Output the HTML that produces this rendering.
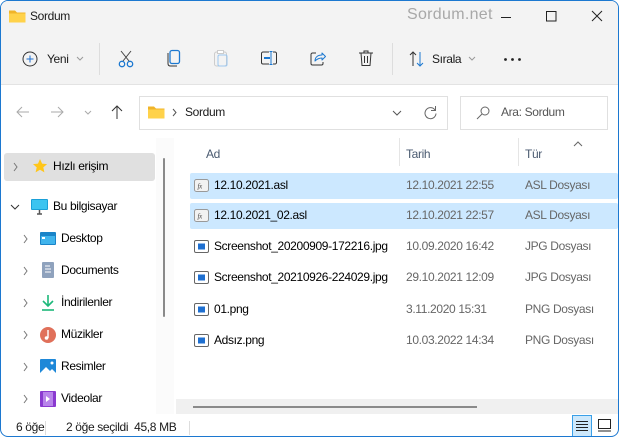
<!DOCTYPE html>
<html><head><meta charset="utf-8"><style>
*{margin:0;padding:0;box-sizing:border-box}
body{width:620px;height:438px;background:#fff;font-family:"Liberation Sans","DejaVu Sans",sans-serif;font-size:12px;color:#1a1a1a;position:relative;overflow:hidden;letter-spacing:-0.35px}
.win{position:absolute;left:0;top:0;width:619px;height:437px;border:1px solid #1c78d0;border-radius:8px;overflow:hidden;background:#fff}
.top{position:absolute;left:0;top:0;right:0;height:84px;background:#f3f3f3;border-bottom:1px solid #e3e3e3}
.a{position:absolute;white-space:nowrap}
svg{position:absolute;overflow:visible}
.row{position:absolute;left:189px;width:428px;height:26px}
.sel{background:#cce8ff}
.nm{position:absolute;left:24px;top:5px;font-size:12px;color:#000}
.dt{position:absolute;left:216px;top:5px;color:#666}
.tp{position:absolute;left:335px;top:5px;color:#666}
.nav{position:absolute;font-size:12px;color:#000}
</style></head><body><div class="win">
<div class="top"></div>
<svg style="left:8px;top:8px" width="17" height="14"><path d="M0 1.5h6l2 2h8.5v10H0z" fill="#f0b429"/><path d="M0 4.5h16.5v9H0z" fill="#ffd24a"/></svg>
<div class="a" style="left:29px;top:8px;font-size:12px">Sordum</div>
<div class="a" style="left:406px;top:5px;font-size:16px;color:#a8a8a8;letter-spacing:.3px">Sordum.net</div>
<svg style="left:500px;top:16px" width="11" height="2"><path d="M0 .5h10" stroke="#222"/></svg>
<svg style="left:545px;top:10px" width="11" height="11"><rect x=".5" y=".5" width="9.5" height="9.5" fill="none" stroke="#222"/></svg>
<svg style="left:591px;top:10px" width="11" height="11"><path d="M0 0l10 10M10 0L0 10" stroke="#222"/></svg>
<svg style="left:21px;top:50px" width="16" height="16"><circle cx="8" cy="8" r="7" fill="none" stroke="#333"/><path d="M8 4.5v7M4.5 8h7" stroke="#1c6fd0"/></svg>
<div class="a" style="left:46px;top:51px">Yeni</div>
<svg style="left:76px;top:56px" width="7" height="4"><path d="M0 0l3 3 3-3" fill="none" stroke="#999"/></svg>
<div class="a" style="left:98px;top:42px;width:1px;height:32px;background:#ddd"></div>
<svg style="left:117px;top:50px" width="17" height="17"><path d="M3 0l8 10M13 0L5 10" stroke="#444"/><circle cx="4" cy="13" r="2.7" fill="none" stroke="#1c78d0" stroke-width="1.3"/><circle cx="12" cy="13" r="2.7" fill="none" stroke="#1c78d0" stroke-width="1.3"/></svg>
<svg style="left:166px;top:49px" width="14" height="17"><rect x="3" y=".5" width="9.5" height="13" rx="2" fill="none" stroke="#1c78d0" stroke-width="1.3"/><path d="M1 3v10.5c0 1.5 1 2.5 2.5 2.5H10" fill="none" stroke="#333"/></svg>
<svg style="left:213px;top:49px" width="15" height="17"><rect x=".5" y="2" width="12" height="14" rx="2" fill="none" stroke="#ccc"/><rect x="4" y="5" width="9" height="11" rx="1.5" fill="none" stroke="#9cc7ef"/><rect x="3.5" y=".5" width="6" height="3" fill="#fff" stroke="#ccc"/></svg>
<svg style="left:260px;top:50px" width="17" height="15"><path d="M8 1H2a1.5 1.5 0 0 0-1.5 1.5v9A1.5 1.5 0 0 0 2 13h6M12 1h2a1.5 1.5 0 0 1 1.5 1.5v9A1.5 1.5 0 0 1 14 13h-2" fill="none" stroke="#333"/><path d="M3 7h6" stroke="#1c78d0" stroke-width="2"/><path d="M10 0v14M8.5 .5h3M8.5 13.5h3" stroke="#1c78d0"/></svg>
<svg style="left:309px;top:49px" width="16" height="16"><path d="M6 3H2.5A1.5 1.5 0 0 0 1 4.5v9A1.5 1.5 0 0 0 2.5 15h9a1.5 1.5 0 0 0 1.5-1.5V12" fill="none" stroke="#333"/><path d="M5 11c0-4 3-6 7-6V3l3.5 3.5L12 10V8c-3 0-5 1-7 3z" fill="none" stroke="#1c78d0" stroke-linejoin="round"/></svg>
<svg style="left:358px;top:49px" width="15" height="17"><path d="M0 3h14M5 3V1h4v2M2 3l1 12.5h8L12 3M5.5 6v7M8.5 6v7" fill="none" stroke="#333"/></svg>
<div class="a" style="left:391px;top:42px;width:1px;height:32px;background:#ddd"></div>
<svg style="left:408px;top:50px" width="16" height="16"><path d="M4 15V1M1 4l3-3 3 3" fill="none" stroke="#333"/><path d="M11 1v14M8 12l3 3 3-3" fill="none" stroke="#1c78d0"/></svg>
<div class="a" style="left:431px;top:51px">Sırala</div>
<svg style="left:468px;top:56px" width="7" height="4"><path d="M0 0l3 3 3-3" fill="none" stroke="#999"/></svg>
<svg style="left:503px;top:57px" width="18" height="3"><circle cx="1.5" cy="1.5" r="1.4" fill="#222"/><circle cx="8.5" cy="1.5" r="1.4" fill="#222"/><circle cx="15.5" cy="1.5" r="1.4" fill="#222"/></svg>
<svg style="left:15px;top:105px" width="14" height="12"><path d="M13 6H1M6 1L1 6l5 5" fill="none" stroke="#aaa"/></svg>
<svg style="left:50px;top:105px" width="14" height="12"><path d="M0 6h12M7 1l5 5-5 5" fill="none" stroke="#aaa"/></svg>
<svg style="left:84px;top:110px" width="6" height="4"><path d="M0 0l3 3 3-3" fill="none" stroke="#aaa"/></svg>
<svg style="left:110px;top:104px" width="12" height="14"><path d="M6 14V1M1 6l5-5 5 5" fill="none" stroke="#333"/></svg>
<div class="a" style="left:138px;top:95px;width:309px;height:34px;border:1px solid #e0e0e0;background:#fff"></div>
<svg style="left:147px;top:104px" width="17" height="14"><path d="M0 1.5h6l2 2h8.5v10H0z" fill="#f0b429"/><path d="M0 4.5h16.5v9H0z" fill="#ffd24a"/></svg>
<svg style="left:171px;top:108px" width="5" height="7"><path d="M1 0l3 3.5L1 7" fill="none" stroke="#555"/></svg>
<div class="a" style="left:184px;top:104px">Sordum</div>
<svg style="left:392px;top:110px" width="8" height="5"><path d="M0 0l4 4 4-4" fill="none" stroke="#555"/></svg>
<svg style="left:423px;top:105px" width="13" height="13"><path d="M11 4A5.5 5.5 0 1 0 12 7.5" fill="none" stroke="#666"/><path d="M11.5 0v4.5H7" fill="none" stroke="#666"/></svg>
<div class="a" style="left:459px;top:95px;width:148px;height:34px;border:1px solid #e0e0e0;background:#fff"></div>
<svg style="left:476px;top:105px" width="13" height="13"><circle cx="8" cy="5" r="4" fill="none" stroke="#666"/><path d="M5 8L0 13" stroke="#666"/></svg>
<div class="a" style="left:500px;top:104px;color:#555">Ara: Sordum</div>
<div class="a" style="left:155px;top:137px;width:18px;height:276px;background:#fbfbfb"></div>
<div class="a" style="left:162px;top:157px;width:2px;height:159px;background:#8a8a8a;border-radius:1px"></div>
<div class="a" style="left:3px;top:152px;width:151px;height:28px;background:#e0e0e0;border-radius:3px"></div>
<svg style="left:12px;top:162px" width="5" height="8"><path d="M1 0l3 4-3 4" fill="none" stroke="#777"/></svg>
<svg style="left:32px;top:158px" width="14" height="14"><path d="M7 0l2.1 4.6 5 .5-3.8 3.3 1.1 5L7 10.8 2.6 13.4l1.1-5L0 5.1l5-.5z" fill="#ffc61a"/></svg>
<div class="nav" style="left:52px;top:158px">Hızlı erişim</div>
<svg style="left:10px;top:204px" width="9" height="5"><path d="M0 0l4 4 4-4" fill="none" stroke="#333"/></svg>
<svg style="left:30px;top:198px" width="17" height="16"><rect x="0" y="0" width="17" height="11" rx="1" fill="#1aa0d8"/><rect x="1" y="1" width="15" height="9" fill="#3cc4f0"/><path d="M6 15h5M8.5 11v4" stroke="#555" stroke-width="1.5"/></svg>
<div class="nav" style="left:52px;top:198px">Bu bilgisayar</div>
<svg style="left:22px;top:234px" width="5" height="8"><path d="M1 0l3 4-3 4" fill="none" stroke="#777"/></svg>
<svg style="left:39px;top:231px" width="16" height="14"><rect width="16" height="13" rx="1" fill="#1a84c8"/><rect x="1" y="4" width="14" height="8" fill="#40b4ec"/><rect x="2" y="5" width="3" height="2" fill="#fff"/></svg>
<div class="nav" style="left:60px;top:230px">Desktop</div>
<svg style="left:22px;top:266px" width="5" height="8"><path d="M1 0l3 4-3 4" fill="none" stroke="#777"/></svg>
<svg style="left:41px;top:261px" width="12" height="16"><rect width="12" height="16" rx="1" fill="#8fa2bd"/><path d="M3 4h5M3 7h6M3 10h6" stroke="#fff"/></svg>
<div class="nav" style="left:60px;top:262px">Documents</div>
<svg style="left:22px;top:298px" width="5" height="8"><path d="M1 0l3 4-3 4" fill="none" stroke="#777"/></svg>
<svg style="left:40px;top:294px" width="14" height="16"><path d="M7 0v11M2 6l5 5 5-5" fill="none" stroke="#1db87a" stroke-width="1.6"/><path d="M1 15h12" stroke="#1db87a" stroke-width="1.6"/></svg>
<div class="nav" style="left:60px;top:294px">İndirilenler</div>
<svg style="left:22px;top:330px" width="5" height="8"><path d="M1 0l3 4-3 4" fill="none" stroke="#777"/></svg>
<svg style="left:39px;top:326px" width="16" height="16"><circle cx="8" cy="8" r="8" fill="#e0705a"/><path d="M8 3v8" stroke="#fff" stroke-width="1.4"/><circle cx="6.5" cy="11" r="1.8" fill="#fff"/></svg>
<div class="nav" style="left:60px;top:326px">Müzikler</div>
<svg style="left:22px;top:362px" width="5" height="8"><path d="M1 0l3 4-3 4" fill="none" stroke="#777"/></svg>
<svg style="left:39px;top:358px" width="16" height="16"><rect width="16" height="16" rx="1" fill="#1e88d8"/><path d="M0 14l6-6 4 4 2-2 4 4v2H0z" fill="#fff"/><circle cx="12" cy="4" r="1.5" fill="#fff"/></svg>
<div class="nav" style="left:60px;top:358px">Resimler</div>
<svg style="left:22px;top:394px" width="5" height="8"><path d="M1 0l3 4-3 4" fill="none" stroke="#777"/></svg>
<svg style="left:39px;top:390px" width="16" height="16"><rect width="16" height="16" rx="1" fill="#8a3ad0"/><rect x="3" y="1" width="10" height="14" fill="#b884ea"/><path d="M6 5v6l4-3z" fill="#fff"/></svg>
<div class="nav" style="left:60px;top:390px">Videolar</div>
<div class="a" style="left:205px;top:146px;color:#4a5a70">Ad</div>
<div class="a" style="left:398px;top:137px;width:1px;height:28px;background:#e5e5e5"></div>
<div class="a" style="left:405px;top:146px;color:#4a5a70">Tarih</div>
<div class="a" style="left:517px;top:137px;width:1px;height:28px;background:#e5e5e5"></div>
<div class="a" style="left:524px;top:146px;color:#4a5a70">Tür</div>
<svg style="left:573px;top:141px" width="9" height="5"><path d="M0 4l4-4 4 4" fill="none" stroke="#666"/></svg>
<div class="row sel" style="top:172px;border-radius:2px"><svg style="left:4px;top:6px" width="15" height="13"><rect x=".5" y=".5" width="14" height="12" rx="2" fill="#f2f2f2" stroke="#999"/><text x="3.5" y="9.5" font-size="7" font-style="italic" font-family="Liberation Serif" fill="#444">fx</text></svg><span class="nm">12.10.2021.asl</span><span class="dt">12.10.2021 22:55</span><span class="tp">ASL Dosyası</span></div>
<div class="row sel" style="top:202px;border-radius:2px"><svg style="left:4px;top:6px" width="15" height="13"><rect x=".5" y=".5" width="14" height="12" rx="2" fill="#f2f2f2" stroke="#999"/><text x="3.5" y="9.5" font-size="7" font-style="italic" font-family="Liberation Serif" fill="#444">fx</text></svg><span class="nm">12.10.2021_02.asl</span><span class="dt">12.10.2021 22:57</span><span class="tp">ASL Dosyası</span></div>
<div class="row" style="top:233px"><svg style="left:4px;top:6px" width="15" height="13"><rect x=".5" y=".5" width="14" height="12" rx="1.5" fill="#fff" stroke="#666"/><rect x="4" y="3.5" width="7" height="6" fill="#1e6fd0"/></svg><span class="nm">Screenshot_20200909-172216.jpg</span><span class="dt">10.09.2020 16:42</span><span class="tp">JPG Dosyası</span></div>
<div class="row" style="top:264px"><svg style="left:4px;top:6px" width="15" height="13"><rect x=".5" y=".5" width="14" height="12" rx="1.5" fill="#fff" stroke="#666"/><rect x="4" y="3.5" width="7" height="6" fill="#1e6fd0"/></svg><span class="nm">Screenshot_20210926-224029.jpg</span><span class="dt">29.10.2021 12:09</span><span class="tp">JPG Dosyası</span></div>
<div class="row" style="top:296px"><svg style="left:4px;top:6px" width="15" height="13"><rect x=".5" y=".5" width="14" height="12" rx="1.5" fill="#fff" stroke="#666"/><rect x="4" y="3.5" width="7" height="6" fill="#1e6fd0"/></svg><span class="nm">01.png</span><span class="dt">3.11.2020 15:31</span><span class="tp">PNG Dosyası</span></div>
<div class="row" style="top:327px"><svg style="left:4px;top:6px" width="15" height="13"><rect x=".5" y=".5" width="14" height="12" rx="1.5" fill="#fff" stroke="#666"/><rect x="4" y="3.5" width="7" height="6" fill="#1e6fd0"/></svg><span class="nm">Adsız.png</span><span class="dt">10.03.2022 14:34</span><span class="tp">PNG Dosyası</span></div>
<div class="a" style="left:175px;top:398px;width:443px;height:15px;background:#f0f0f0"></div>
<div class="a" style="left:192px;top:405px;width:284px;height:2px;background:#8a8a8a"></div>
<div class="a" style="left:15px;top:419px">6 öğe</div>
<div class="a" style="left:44px;top:420px;width:1px;height:14px;background:#ddd"></div>
<div class="a" style="left:65px;top:419px">2 öğe seçildi &nbsp;45,8 MB</div>
<div class="a" style="left:188px;top:420px;width:1px;height:14px;background:#ddd"></div>
<div class="a" style="left:571px;top:414px;width:20px;height:22px;border:1px solid #3aa0e8;background:#cde8fb"></div>
<svg style="left:575px;top:419px" width="12" height="12"><path d="M0 1.5h12M0 4.5h12M0 7.5h12M0 10.5h12" stroke="#222"/></svg>
<svg style="left:597px;top:418px" width="14" height="13"><rect x=".5" y=".5" width="12" height="9" fill="none" stroke="#222"/><path d="M0 12h13" stroke="#222"/></svg>
</div></body></html>
